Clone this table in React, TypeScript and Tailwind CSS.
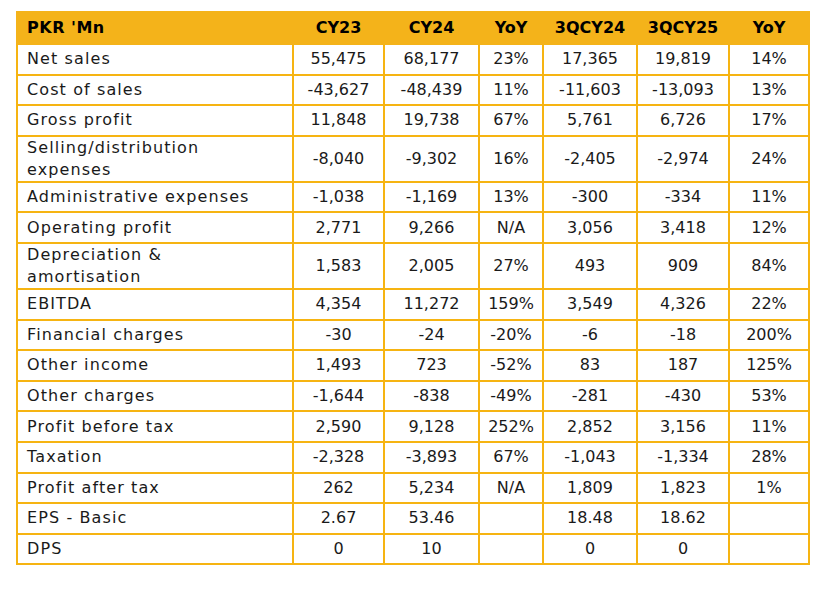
const cols = ["CY23", "CY24", "YoY", "3QCY24", "3QCY25", "YoY"];

type Row = { label: string[]; values: string[] };

const rows: Row[] = [
  { label: ["Net sales"], values: ["55,475", "68,177", "23%", "17,365", "19,819", "14%"] },
  { label: ["Cost of sales"], values: ["-43,627", "-48,439", "11%", "-11,603", "-13,093", "13%"] },
  { label: ["Gross profit"], values: ["11,848", "19,738", "67%", "5,761", "6,726", "17%"] },
  { label: ["Selling/distribution", "expenses"], values: ["-8,040", "-9,302", "16%", "-2,405", "-2,974", "24%"] },
  { label: ["Administrative expenses"], values: ["-1,038", "-1,169", "13%", "-300", "-334", "11%"] },
  { label: ["Operating profit"], values: ["2,771", "9,266", "N/A", "3,056", "3,418", "12%"] },
  { label: ["Depreciation &", "amortisation"], values: ["1,583", "2,005", "27%", "493", "909", "84%"] },
  { label: ["EBITDA"], values: ["4,354", "11,272", "159%", "3,549", "4,326", "22%"] },
  { label: ["Financial charges"], values: ["-30", "-24", "-20%", "-6", "-18", "200%"] },
  { label: ["Other income"], values: ["1,493", "723", "-52%", "83", "187", "125%"] },
  { label: ["Other charges"], values: ["-1,644", "-838", "-49%", "-281", "-430", "53%"] },
  { label: ["Profit before tax"], values: ["2,590", "9,128", "252%", "2,852", "3,156", "11%"] },
  { label: ["Taxation"], values: ["-2,328", "-3,893", "67%", "-1,043", "-1,334", "28%"] },
  { label: ["Profit after tax"], values: ["262", "5,234", "N/A", "1,809", "1,823", "1%"] },
  { label: ["EPS - Basic"], values: ["2.67", "53.46", "", "18.48", "18.62", ""] },
  { label: ["DPS"], values: ["0", "10", "", "0", "0", ""] },
];

export default function App() {
  return (
    <div className="w-[827px] h-[590px] bg-white pt-[11px] pl-[16px] font-['DejaVu_Sans',sans-serif] text-[16px] text-[#1a1a1a]">
      <table className="table-fixed border-collapse w-[792px]">
        <colgroup>
          <col className="w-[276px]" />
          <col className="w-[91px]" />
          <col className="w-[95px]" />
          <col className="w-[64px]" />
          <col className="w-[94px]" />
          <col className="w-[92px]" />
          <col className="w-[80px]" />
        </colgroup>
        <thead>
          <tr className="h-[32px] bg-[#f4b31a]">
            <th className="border-2 border-[#f4b31a] pl-[9px] text-left font-bold text-black leading-[22px] tracking-[0.5px]">PKR 'Mn</th>
            {cols.map((c, i) => (
              <th key={i} className="border-2 border-[#f4b31a] text-center font-bold text-black leading-[22px]">
                {c}
              </th>
            ))}
          </tr>
        </thead>
        <tbody>
          {rows.map((r) => (
            <tr key={r.label.join(" ")} className={r.label.length > 1 ? "h-[46px]" : "h-[30.6px]"}>
              <td className="border-2 border-[#f6b412] pl-[9px] text-left leading-[22px] tracking-[1.1px]">
                {r.label.map((l, i) => (
                  <div key={i}>{l}</div>
                ))}
              </td>
              {r.values.map((v, i) => (
                <td key={i} className="border-2 border-[#f6b412] text-center leading-[22px]">
                  {v}
                </td>
              ))}
            </tr>
          ))}
        </tbody>
      </table>
    </div>
  );
}
